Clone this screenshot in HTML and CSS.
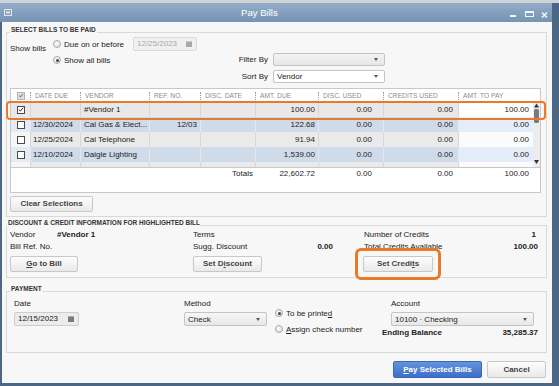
FILE: index.html
```html
<!DOCTYPE html>
<html>
<head>
<meta charset="utf-8">
<title>Pay Bills</title>
<link rel="stylesheet" href="styles.css">
</head>
<body>
<div class="screen">
  <div class="topstrip"></div>
  <div class="window">
    <div class="titlebar">
      <svg class="winicon" width="8" height="7" viewBox="0 0 8 7"><rect x="0.5" y="0.5" width="7" height="6" fill="none" stroke="#dfe7ef" stroke-width="1"/><rect x="2" y="2.5" width="4" height="2" fill="#dfe7ef"/></svg>
      <span class="title">Pay Bills</span>
      <svg class="controls" width="44" height="19" viewBox="0 0 44 19">
        <rect x="2" y="12" width="6" height="2" fill="#f2f5f8"/>
        <rect x="17.5" y="8.5" width="8" height="5" fill="none" stroke="#f2f5f8" stroke-width="1"/>
        <rect x="17" y="8" width="9" height="2" fill="#f2f5f8"/>
        <path d="M34 9.5 L39 14.5 M39 9.5 L34 14.5" stroke="#f2f5f8" stroke-width="1.6"/>
      </svg>
    </div>
    <div class="body">
      <div class="group g1">
        <div class="legend">SELECT BILLS TO BE PAID</div>
        <div class="top-area">
          <div class="showbills">
            <span class="lbl-show">Show bills</span>
            <div class="radios">
              <div class="rrow">
                <span class="radio"></span>
                <span class="rtext">Due on or before</span>
                <span class="date-input disabled">12/25/2023<span class="cal"></span></span>
              </div>
              <div class="rrow">
                <span class="radio on"></span>
                <span>Show all bills</span>
              </div>
            </div>
          </div>
          <div class="filters">
            <span class="flabel">Filter By</span>
            <span class="select"><span class="sel-text"></span><span class="arrow"></span></span>
            <span class="flabel">Sort By</span>
            <span class="select white"><span class="sel-text">Vendor</span><span class="arrow"></span></span>
          </div>
        </div>

        <div class="tbl">
          <div class="thead cols">
            <span class="th-chk"><span class="chk hdr"><svg width="7" height="7" viewBox="0 0 7 7"><path d="M1.2 3.6 L2.9 5.2 L5.9 1.6" fill="none" stroke="#8c8c8c" stroke-width="1.3"/></svg></span></span>
            <span class="th">DATE DUE</span>
            <span class="th">VENDOR</span>
            <span class="th">REF. NO.</span>
            <span class="th">DISC. DATE</span>
            <span class="th">AMT. DUE</span>
            <span class="th">DISC. USED</span>
            <span class="th">CREDITS USED</span>
            <span class="th">AMT. TO PAY</span>
            <span></span>
          </div>
          <div class="tbody">
            <div class="rowlist">
              <div class="row cols sel">
                <span class="c chkc"><span class="chk"><svg width="7" height="7" viewBox="0 0 7 7"><path d="M1 3.5 L2.8 5.3 L6 1.4" fill="none" stroke="#222" stroke-width="1.1"/></svg></span></span>
                <span class="c date"></span>
                <span class="c vendor">#Vendor 1</span>
                <span class="c ref"></span>
                <span class="c"></span>
                <span class="c num due">100.00</span>
                <span class="c num dused">0.00</span>
                <span class="c num cused">0.00</span>
                <span class="c num pay">100.00</span>
              </div>
              <div class="row cols blue">
                <span class="c chkc"><span class="chk"></span></span>
                <span class="c date">12/30/2024</span>
                <span class="c vendor">Cal Gas &amp; Elect...</span>
                <span class="c ref num">12/03</span>
                <span class="c"></span>
                <span class="c num due">122.68</span>
                <span class="c num dused">0.00</span>
                <span class="c num cused">0.00</span>
                <span class="c num pay">0.00</span>
              </div>
              <div class="row cols gray">
                <span class="c chkc"><span class="chk"></span></span>
                <span class="c date">12/25/2024</span>
                <span class="c vendor">Cal Telephone</span>
                <span class="c ref"></span>
                <span class="c"></span>
                <span class="c num due">91.94</span>
                <span class="c num dused">0.00</span>
                <span class="c num cused">0.00</span>
                <span class="c num pay">0.00</span>
              </div>
              <div class="row cols blue">
                <span class="c chkc"><span class="chk"></span></span>
                <span class="c date">12/10/2024</span>
                <span class="c vendor">Daigle Lighting</span>
                <span class="c ref"></span>
                <span class="c"></span>
                <span class="c num due">1,539.00</span>
                <span class="c num dused">0.00</span>
                <span class="c num cused">0.00</span>
                <span class="c num pay">0.00</span>
              </div>
              <div class="row cols gray">
                <span class="c chkc"></span>
                <span class="c date"></span>
                <span class="c vendor"></span>
                <span class="c ref"></span>
                <span class="c"></span>
                <span class="c num due"></span>
                <span class="c num dused"></span>
                <span class="c num cused"></span>
                <span class="c num pay"></span>
              </div>
            </div>
            <div class="scrollbar">
              <svg width="7" height="65" viewBox="0 0 7 65">
                <path d="M1 5.5 L3.5 1.5 L6 5.5 Z" fill="#333"/>
                <rect x="1" y="7" width="5" height="14" rx="1.5" fill="#7a7a7a"/>
                <path d="M1 58 L3.5 62 L6 58 Z" fill="#333"/>
              </svg>
            </div>
          </div>
          <div class="totals cols">
            <span></span><span></span><span></span><span></span>
            <span class="tlabel">Totals</span>
            <span class="num due">22,602.72</span>
            <span class="num dused">0.00</span>
            <span class="num cused">0.00</span>
            <span class="num pay">100.00</span>
            <span></span>
          </div>
        </div>
        <button class="btn clear">Clear Selections</button>
      </div>

      <div class="group g2">
        <div class="legend">DISCOUNT &amp; CREDIT INFORMATION FOR HIGHLIGHTED BILL</div>
        <div class="disc-grid">
          <div class="dcol">
            <div class="drow"><span class="vlabel">Vendor</span><b>#Vendor 1</b></div>
            <div class="drow">Bill Ref. No.</div>
            <button class="btn gotobill"><u>G</u>o to Bill</button>
          </div>
          <div class="dcol">
            <div class="drow">Terms</div>
            <div class="drow split w140"><span>Sugg. Discount</span><b>0.00</b></div>
            <button class="btn setdisc">Set D<u>i</u>scount</button>
          </div>
          <div class="dcol">
            <div class="drow split"><span>Number of Credits</span><b class="one">1</b></div>
            <div class="drow split"><span>Total Credits Available</span><b>100.00</b></div>
            <button class="btn setcred">Set Credi<u>t</u>s</button>
          </div>
        </div>
      </div>

      <div class="group g3">
        <div class="legend">PAYMENT</div>
        <div class="paycols">
          <div class="col-date">
            <div class="plabel">Date</div>
            <span class="date-input pdate">12/15/2023<span class="cal"></span></span>
          </div>
          <div class="col-method">
            <div class="plabel">Method</div>
            <span class="select method"><span class="sel-text">Check</span><span class="arrow"></span></span>
          </div>
          <div class="col-radio">
            <div class="rrow"><span class="radio on"></span><span>To be printe<u>d</u></span></div>
            <div class="rrow"><span class="radio"></span><span><u>A</u>ssign check number</span></div>
          </div>
          <div class="col-acct">
            <div class="plabel acct">Account</div>
            <span class="select account"><span class="sel-text">10100 · Checking</span><span class="arrow"></span></span>
            <div class="ending"><b>Ending Balance</b><b>35,285.37</b></div>
          </div>
        </div>
      </div>

      <div class="actions">
        <button class="btn primary"><u>P</u>ay Selected Bills</button>
        <button class="btn cancel">Cancel</button>
      </div>
    </div>
  </div>
  <div class="hl hl-row"></div>
  <div class="hl hl-credits"></div>
</div>
</body>
</html>
```

FILE: styles.css
```css
* { box-sizing: border-box; }
html, body { margin: 0; padding: 0; }
body {
  width: 559px;
  height: 386px;
  overflow: hidden;
  font-family: "Liberation Sans", Arial, sans-serif;
  font-size: 8px;
  color: #222;
}
.screen {
  position: relative;
  width: 559px;
  height: 386px;
  background: #4c6786;
  display: flex;
  flex-direction: column;
}
.topstrip { height: 3px; flex: none; background: #cfd3d8; }
.window { width: 552px; flex: none; display: flex; flex-direction: column; }

.titlebar {
  height: 19px;
  display: flex;
  align-items: center;
  background: linear-gradient(#93adc8, #7693b3);
}
.winicon { margin-left: 4px; flex: none; }
.title { margin-left: 229px; color: #fff; font-size: 9.6px; line-height: 19px; }
.controls { margin-left: auto; flex: none; display: block; }

.body {
  height: 361px;
  margin-left: 2px;
  width: 550px;
  background: #f7f7f7;
  padding: 10px 5px 0 4px;
  display: flex;
  flex-direction: column;
}

.group {
  border: 1px solid #d9d9d9;
  background: #f7f7f7;
  display: flex;
  flex-direction: column;
}
.legend {
  align-self: flex-start;
  margin-top: -7px;
  font-size: 6.5px;
  font-weight: bold;
  line-height: 8px;
  color: #333;
  background: #f7f7f7;
  padding: 0 1px;
}

/* group 1 */
.g1 { padding: 0 5px 4px 3px; }
.top-area { display: flex; margin-top: 3px; height: 46px; }
.showbills { display: flex; width: 187px; flex: none; align-items: flex-start; }
.lbl-show { width: 43px; line-height: 10px; margin-top: 7px; flex: none; }
.radios { display: flex; flex-direction: column; gap: 2px; }
.rrow { display: flex; align-items: center; height: 14px; white-space: nowrap; }
.radio {
  width: 8px; height: 8px; flex: none;
  border-radius: 50%;
  border: 1px solid #a9a9a9;
  background: radial-gradient(circle at 40% 35%, #fbfbfb, #d9d9d9);
  margin-right: 3px;
  display: flex; align-items: center; justify-content: center;
}
.radio.on::after {
  content: "";
  width: 3px; height: 3px; border-radius: 50%;
  background: #444;
}
.rtext { width: 69px; }
.date-input {
  width: 64px; height: 14px; flex: none;
  border: 1px solid #cfcfcf;
  border-radius: 2px;
  background: #efefef;
  display: flex; align-items: center; justify-content: space-between;
  padding: 0 4px 0 3px;
  line-height: 12px;
}
.date-input.disabled { color: #a8a8a8; background: #f0f0f0; border-color: #dadada; }
.cal { width: 6px; height: 6px; background: #7b7b7b; border-top: 1px solid #aaa; }
.disabled .cal { background: #a9a9a9; border-top-color: #c9c9c9; }

.filters {
  display: grid;
  grid-template-columns: 40px 112px;
  column-gap: 5px;
  row-gap: 4px;
  margin-left: 31px;
  margin-top: 16px;
  align-self: flex-start;
}
.flabel { text-align: right; line-height: 13px; }
.select {
  height: 13px;
  border: 1px solid #c4c4c4;
  border-radius: 2px;
  background: linear-gradient(#f3f3f3, #e6e6e6);
  display: flex; align-items: center; justify-content: space-between;
  padding: 0 6px 0 3px;
  line-height: 11px;
}
.select.white { background: #fff; }
.arrow {
  width: 0; height: 0;
  border-left: 2.5px solid transparent;
  border-right: 2.5px solid transparent;
  border-top: 3px solid #555;
}

/* table */
.tbl {
  margin-top: 5px;
  height: 105px;
  border: 1px solid #c8c8c8;
  background: #fff;
  display: flex;
  flex-direction: column;
  flex: none;
}
.cols {
  display: grid;
  grid-template-columns: 19px 50px 69px 51px 55px 63px 65px 75px 75px 7px;
}
.thead { height: 13px; align-items: center; font-size: 6.7px; color: #8b8b8b; }
.th-chk { display: flex; justify-content: center; }
.th {
  border-left: 1px dotted #9a9a9a;
  line-height: 8px;
  padding-left: 4px;
  white-space: nowrap;
}
.chk {
  width: 8px; height: 8px;
  border: 1px solid #4a4a4a;
  background: #fff;
  display: flex; align-items: center; justify-content: center;
}
.chk svg { display: block; }
.chk.hdr { border-color: #b5b5b5; background: #e2e2e2; }

.tbody { display: flex; height: 66px; border-bottom: 1px solid #c8c8c8; flex: none; }
.rowlist { width: 522px; height: 65px; overflow: hidden; }
.rowlist .cols { grid-template-columns: 19px 50px 69px 51px 55px 63px 65px 75px 75px; }
.row { height: 15px; line-height: 15px; white-space: nowrap; }
.c { overflow: hidden; border-left: 1px solid #d6d6d6; }
.c.chkc { border-left: none; display: flex; align-items: center; justify-content: center; }
.date { padding-left: 2px; }
.vendor { padding-left: 3px; }
.num { text-align: right; }
.ref { padding-right: 3px; }
.due { padding-right: 3px; }
.dused { padding-right: 11px; }
.cused { padding-right: 5px; }
.pay { padding-right: 4px; }

.row.sel .c { background: #e8e8e8; }
.row.sel .c.pay { background: #fff; }
.row.blue .c { background: #cfdbe8; border-left-color: #e2e9f2; }
.row.blue .c.chkc { background: #e3ebf5; }
.row.blue .c.pay { background: #e4edf9; }
.row.gray .c { background: #eaeaea; }
.row.gray .c.chkc { background: #f6f6f6; }
.row.gray .c.pay { background: #fbfbfb; }

.scrollbar { width: 7px; height: 65px; background: #ececec; }
.scrollbar svg { display: block; }

.totals { height: 12px; line-height: 12px; white-space: nowrap; }
.tlabel { text-align: right; padding-right: 2px; }

.btn {
  font-family: inherit;
  font-size: 8px;
  font-weight: bold;
  color: #444;
  padding: 0;
  margin: 0;
  border: 1px solid #c8c8c8;
  border-radius: 2px;
  background: linear-gradient(#fdfdfd, #e9e9e9);
  height: 16px;
  line-height: 14px;
  white-space: nowrap;
}
.btn u { text-decoration: underline; }
.clear { margin-top: 3px; width: 83px; align-self: flex-start; }

/* group 2 */
.g2 { margin-top: 8px; padding: 0 8px 5px 3px; }
.g2 .legend { margin-left: -3px; }
.disc-grid {
  display: grid;
  grid-template-columns: 183px 171px 174px;
  margin-top: 2px;
}
.dcol { display: flex; flex-direction: column; align-items: flex-start; }
.drow { line-height: 12px; height: 12px; white-space: nowrap; }
.drow.split { display: flex; justify-content: space-between; width: 100%; }
.drow.w140 { width: 140px; }
.vlabel { display: inline-block; width: 47px; }
.one { padding-right: 2px; }
.dcol .btn { margin-top: 3px; }
.gotobill { width: 68px; }
.setdisc { width: 69px; }
.setcred { width: 70px; margin-left: -1px; }

/* group 3 */
.g3 { margin-top: 13px; padding: 0 0 13px 0; }
.g3 .legend { margin-left: 3px; }
.paycols { display: flex; margin-top: 6px; }
.plabel { line-height: 10px; height: 10px; }
.col-date { margin-left: 7px; width: 170px; flex: none; }
.pdate { margin-top: 3px; width: 65px; background: #ececec; border-color: #cdcdcd; color: #222; }
.col-method { width: 91px; flex: none; }
.method { margin-top: 3px; width: 83px; height: 14px; background: linear-gradient(#f6f6f6, #e8e8e8); }
.col-radio { width: 107px; flex: none; padding-top: 7px; display: flex; flex-direction: column; gap: 2px; }
.col-acct { width: 156px; flex: none; display: flex; flex-direction: column; }
.acct { margin-left: 9px; }
.account { margin-top: 3px; margin-left: 9px; width: 143px; height: 14px; background: linear-gradient(#f6f6f6, #e8e8e8); }
.ending { margin-top: 1px; height: 12px; line-height: 12px; display: flex; justify-content: space-between; }

.actions {
  display: flex;
  justify-content: flex-end;
  gap: 5px;
  margin-top: 8px;
  margin-right: 1px;
}
.actions .btn { height: 17px; line-height: 15px; }
.primary {
  width: 89px;
  color: #fff;
  border-color: #3a68b6;
  background: linear-gradient(#6294df, #3c6fc8);
}
.cancel { width: 59px; }

/* overlays */
.hl {
  position: absolute;
  border: 2.5px solid #e97a2b;
  pointer-events: none;
}
.hl-row { left: 6px; top: 101px; width: 540px; height: 19px; border-radius: 4px; }
.hl-credits { left: 355px; top: 248px; width: 86px; height: 32px; border-width: 3px; border-radius: 6px; }
```
